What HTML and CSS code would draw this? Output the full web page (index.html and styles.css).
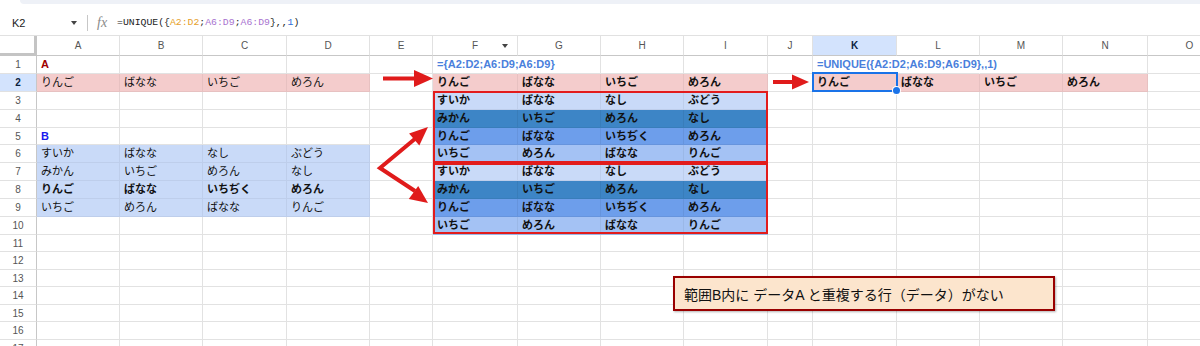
FILE: index.html
```html
<!DOCTYPE html>
<html lang="ja">
<head>
  <meta charset="UTF-8" />
  <meta name="viewport" content="width=device-width, initial-scale=1.0" />
  <title>UNIQUE sheet</title>
  <link rel="stylesheet" href="styles.css">
</head>
<body>
  <div class="app">
    <div class="topband"></div>
    <div class="fbar">
      <div class="namebox">K2</div>
      <div class="nb-arrow"></div>
      <div class="sep"></div>
      <div class="fx">fx</div>
      <div class="formula">=UNIQUE({<span class="r1">A2:D2</span>;<span class="r2">A6:D9</span>;<span class="r2">A6:D9</span>},,<span class="num">1</span>)</div>
    </div>

    <div id="grid" class="grid"></div>

    <!-- overlays -->
    <div class="hl-box box1"></div>
    <div class="hl-box box2"></div>
    <div class="selection"></div>
    <div class="handle"></div>

    <svg class="arrows" width="1200" height="346" viewBox="0 0 1200 346">
      <g fill="#e01b1b" stroke="#e01b1b">
        <line x1="383" y1="78.5" x2="417" y2="78.5" stroke-width="4" />
        <polygon points="414,70 433,78.5 414,87" stroke="none" />
        <line x1="773" y1="82" x2="795" y2="82" stroke-width="4" />
        <polygon points="792,74.5 809,82 792,89.5" stroke="none" />
        <polyline points="416,138 380,168 415,191" fill="none" stroke-width="4" stroke-linejoin="miter" />
        <polygon points="428,127 419.3,145.6 409.1,133.4" stroke="none" />
        <polygon points="428,203 408.8,198.9 418.2,185.9" stroke="none" />
      </g>
    </svg>

    <div class="note">範囲B内に データA と重複する行（データ）がない</div>
  </div>

  <script>
    const COLS = "ABCDEFGHIJKLMNO".split("");
    const ROWS = 17;
    const cells = {};

    function put(r, c0, vals, cls) {
      const start = COLS.indexOf(c0);
      vals.forEach((v, i) => {
        cells[COLS[start + i] + r] = { text: v, cls: cls };
      });
    }

    const dataA = ["りんご", "ばなな", "いちご", "めろん"];
    const dataB = [
      ["すいか", "ばなな", "なし", "ぶどう"],
      ["みかん", "いちご", "めろん", "なし"],
      ["りんご", "ばなな", "いちぢく", "めろん"],
      ["いちご", "めろん", "ばなな", "りんご"],
    ];

    put(1, "A", ["A"], "lbl-a");
    put(5, "A", ["B"], "lbl-b");
    put(1, "F", ["={A2:D2;A6:D9;A6:D9}"], "fml spill");
    put(1, "K", ["=UNIQUE({A2:D2;A6:D9;A6:D9},,1)"], "fml spill");
    put(1, "L", [""], "spill");

    put(2, "A", dataA, "pink");
    dataB.forEach((row, i) => put(6 + i, "A", row, i === 2 ? "sky bold" : "sky"));

    put(2, "F", dataA, "pink bold");
    [0, 4].forEach(off => {
      dataB.forEach((row, i) => put(3 + off + i, "F", row, "tone" + (i + 1) + " bold"));
    });

    put(2, "K", dataA, "pink bold");

    const grid = document.getElementById("grid");
    let html = '<div class="corner"></div>';
    COLS.forEach(c => {
      const active = c === "K" ? " active" : "";
      const menu = c === "F" ? '<span class="col-menu"></span>' : "";
      html += `<div class="col-head${active}">${c}${menu}</div>`;
    });
    for (let r = 1; r <= ROWS; r++) {
      html += `<div class="row-head${r === 2 ? " active" : ""}">${r}</div>`;
      COLS.forEach(c => {
        const cell = cells[c + r];
        if (cell) {
          html += `<div class="cell ${cell.cls}">${cell.text}</div>`;
        } else {
          html += '<div class="cell"></div>';
        }
      });
    }
    grid.innerHTML = html;
  </script>
</body>
</html>
```

FILE: styles.css
```css
body {
  margin: 0;
  background: #fff;
  font-family: "Liberation Sans", "Noto Sans CJK JP", sans-serif;
  color: #1f1f1f;
}
.app {
  position: relative;
  width: 1200px;
  height: 346px;
  overflow: hidden;
}
.topband {
  height: 4px;
  margin-left: 20px;
  margin-bottom: 6px;
  background: #eef1f7;
  border-bottom-left-radius: 8px;
}
.fbar {
  height: 25px;
  display: flex;
  align-items: center;
  font-size: 11px;
}
.namebox {
  width: 59px;
  padding-left: 12px;
  color: #222;
}
.nb-arrow {
  width: 0;
  height: 0;
  border-left: 3px solid transparent;
  border-right: 3px solid transparent;
  border-top: 4px solid #444;
}
.sep {
  width: 1px;
  height: 16px;
  margin-left: 10px;
  background: #c7c7c7;
}
.fx {
  width: 20px;
  margin-left: 9px;
  font-family: "Liberation Serif", serif;
  font-style: italic;
  font-size: 14px;
  color: #8a8a8a;
}
.formula {
  font-family: "Liberation Mono", monospace;
  font-size: 9.8px;
  color: #222;
}
.formula .r1 { color: #e69f28; }
.formula .r2 { color: #a873cf; }
.formula .num { color: #2f6fd8; }

.grid {
  display: grid;
  grid-template-columns: 37px 83px 83px 84px 83px 63px 85px 83px 83px 84px 45px 84px 83px 83px 85px 84px;
  grid-template-rows: 20px repeat(10, 17.9px) repeat(7, 17.5px);
  border-top: 1px solid #e1e1e1;
}
.corner {
  border-right: 3px solid #c4c4c4;
  border-bottom: 3px solid #c4c4c4;
  box-sizing: border-box;
}
.col-head,
.row-head {
  display: flex;
  align-items: center;
  justify-content: center;
  font-size: 10px;
  color: #555;
  box-sizing: border-box;
}
.col-head {
  position: relative;
  border-right: 1px solid #e1e1e1;
  border-bottom: 1px solid #c7c7c7;
}
.row-head {
  border-right: 1px solid #c7c7c7;
  border-bottom: 1px solid #e1e1e1;
}
.col-head.active,
.row-head.active {
  background: #d3e3fd;
  color: #0b1f3f;
  font-weight: bold;
}
.col-menu {
  position: absolute;
  right: 9px;
  top: 8px;
  border-left: 3px solid transparent;
  border-right: 3px solid transparent;
  border-top: 4px solid #444;
}
.cell {
  box-sizing: border-box;
  border-right: 1px solid #e2e2e2;
  border-bottom: 1px solid #e2e2e2;
  padding-left: 4px;
  font-family: "Liberation Sans", "Noto Sans CJK JP", sans-serif;
  font-size: 11px;
  line-height: 17px;
  white-space: nowrap;
  overflow: visible;
  color: #111;
}
.cell.spill { border-right-color: transparent; }
.bold { font-weight: bold; }
.fml {
  font-weight: bold;
  color: #4a7fdc;
}
.lbl-a {
  font-weight: bold;
  color: #a00000;
}
.lbl-b {
  font-weight: bold;
  color: #1a1aee;
}
.pink { background: #f4cccc; border-color: rgba(0, 0, 0, 0.05); }
.sky { background: #c9daf8; border-color: rgba(0, 0, 0, 0.05); }
.tone1 { background: #c9daf8; border-color: rgba(0, 0, 0, 0.05); }
.tone2 { background: #3d85c6; border-color: rgba(0, 0, 0, 0.06); }
.tone3 { background: #6d9eeb; border-color: rgba(0, 0, 0, 0.06); }
.tone4 { background: #a4c2f4; border-color: rgba(0, 0, 0, 0.05); }

.hl-box {
  position: absolute;
  left: 433px;
  width: 335px;
  box-sizing: border-box;
  border: 2px solid #e21c1c;
}
.box1 { top: 91px; height: 72px; }
.box2 { top: 163px; height: 71px; }
.selection {
  position: absolute;
  left: 812px;
  top: 72px;
  width: 86px;
  height: 20px;
  box-sizing: border-box;
  border: 2px solid #1a73e8;
}
.handle {
  position: absolute;
  left: 893px;
  top: 87px;
  width: 7px;
  height: 7px;
  border-radius: 50%;
  background: #1a73e8;
  box-shadow: 0 0 0 1px #fff;
}
.arrows {
  position: absolute;
  left: 0;
  top: 0;
  pointer-events: none;
}
.note {
  position: absolute;
  left: 673px;
  top: 276px;
  width: 382px;
  height: 35px;
  box-sizing: border-box;
  padding-left: 9px;
  display: flex;
  align-items: center;
  background: #fce5cd;
  border: 2px solid #990000;
  box-shadow: 1px 1px 2px rgba(0, 0, 0, 0.3);
  font-family: "Liberation Sans", "Noto Sans CJK JP", sans-serif;
  font-size: 14px;
  color: #111;
}
```
